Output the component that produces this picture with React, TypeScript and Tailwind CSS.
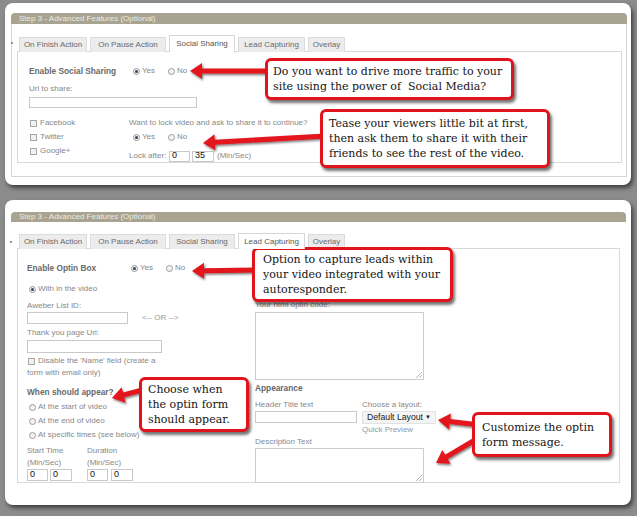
import React from "react";

const ui = "font-['Liberation_Sans',Arial,sans-serif]";
const callFont = "font-['DejaVu_Serif','Liberation_Serif',serif]";

const tabs = [
  { label: "On Finish Action", w: "w-[68px]" },
  { label: "On Pause Action", w: "w-[76px]" },
  { label: "Social Sharing", w: "w-[66px]" },
  { label: "Lead Capturing", w: "w-[67px]" },
  { label: "Overlay", w: "w-[37px]" },
];

const Radio = ({ on }: { on?: boolean }) => (
  <span className="inline-flex h-[7px] w-[7px] shrink-0 items-center justify-center rounded-full border border-[#9a9a9a] bg-[#f3f3f3]">
    {on && <span className="h-[3px] w-[3px] rounded-full bg-[#2c4560]" />}
  </span>
);

const Check = () => <span className="h-[7px] w-[7px] shrink-0 border border-[#a6a6a6] bg-[#f1f1f1]" />;

const YesNo = () => (
  <div className="flex items-center">
    <span className="flex w-[35px] items-center gap-[2px]">
      <Radio on />
      Yes
    </span>
    <span className="flex items-center gap-[2px]">
      <Radio />
      No
    </span>
  </div>
);

const Tabs = ({ active, h }: { active: number; h: string }) => (
  <div className={`flex items-end gap-[3px] pl-[2px] ${h}`}>
    {tabs.map((t, i) =>
      i === active ? (
        <div
          key={t.label}
          className={`relative z-10 flex h-full items-center justify-center border border-b-0 border-[#d6d6d6] bg-white text-[#555] ${t.w}`}
        >
          {t.label}
        </div>
      ) : (
        <div
          key={t.label}
          className={`flex h-[15px] items-center justify-center border border-b-0 border-[#dcdcdc] bg-[#ececec] text-[#6a6a6a] ${t.w}`}
        >
          {t.label}
        </div>
      )
    )}
  </div>
);

const Header = ({ h }: { h: string }) => (
  <div className={`flex items-center rounded-t-[4px] bg-[#a8a491] pl-[8px] text-[8px] text-[#ecebe2] ${h}`}>
    Step 3 - Advanced Features (Optional)
  </div>
);

const Box = ({ w, h, children }: { w: string; h: string; children?: React.ReactNode }) => (
  <div className={`flex items-center border border-[#c9c9c9] bg-white pl-[2px] text-[9px] text-[#111] ${w} ${h}`}>
    {children}
  </div>
);

const TextArea = ({ h }: { h: string }) => (
  <div className={`relative w-[169px] border border-[#cdcdcd] bg-white ${h}`}>
    <span className="absolute bottom-[1px] right-[1px] h-[6px] w-[6px] bg-[linear-gradient(135deg,transparent_45%,#bbb_45%,#bbb_55%,transparent_55%,transparent_70%,#bbb_70%,#bbb_80%,transparent_80%)]" />
  </div>
);

function arrowPoints(x1: number, y1: number, x2: number, y2: number) {
  const sw = 5, hl = 12, hw = 16;
  const dx = x2 - x1, dy = y2 - y1;
  const L = Math.hypot(dx, dy);
  const ux = dx / L, uy = dy / L, nx = -uy, ny = ux;
  const bx = x2 - ux * hl, by = y2 - uy * hl;
  const pts = [
    [x1 + (nx * sw) / 2, y1 + (ny * sw) / 2],
    [bx + (nx * sw) / 2, by + (ny * sw) / 2],
    [bx + (nx * hw) / 2, by + (ny * hw) / 2],
    [x2, y2],
    [bx - (nx * hw) / 2, by - (ny * hw) / 2],
    [bx - (nx * sw) / 2, by - (ny * sw) / 2],
    [x1 - (nx * sw) / 2, y1 - (ny * sw) / 2],
  ];
  return pts.map((p) => p.map((v) => v.toFixed(1)).join(",")).join(" ");
}

const arrows = [
  [272, 71, 190, 71],
  [326, 136, 203, 143],
  [258, 270, 192, 271],
  [146, 389, 112, 398],
  [480, 425, 438, 420],
  [480, 437, 436, 463],
];

const Callout = ({ pos, children }: { pos: string; children: React.ReactNode }) => (
  <div
    className={`absolute flex items-center whitespace-nowrap rounded-[6px] border-[3px] border-[#e1131b] bg-white text-[11px] leading-[15px] text-[#141414] shadow-[2px_3px_3px_rgba(0,0,0,0.55)] ${callFont} ${pos}`}
  >
    <div>{children}</div>
  </div>
);

export default function App() {
  return (
    <div className={`relative h-[516px] w-[637px] overflow-hidden bg-[#8c8c8c] pt-[3px] ${ui}`}>
      {/* panel 1 */}
      <div className="ml-[5px] h-[182px] w-[626px] rounded-[8px] bg-white pl-[6px] pr-[4px] pt-[10px] text-[8px] text-[#888] shadow-[2px_3px_4px_rgba(0,0,0,0.55)]">
        <Header h="h-[11px]" />
        <div className="relative h-[153px] border border-t-0 border-[#d6d6d6] pl-[5px] pt-[11px]">
          <span className="absolute left-[-1px] top-[18px] h-[2px] w-[2px] rounded-full bg-[#777]" />
          <Tabs active={2} h="h-[17px]" />
          <div className="-mt-px h-[112px] w-[605px] border border-[#d9d9d9] pl-[11px] pt-[12px]">
            <div className="flex h-[14px] items-center">
              <span className="w-[104px] text-[8.3px] font-bold text-[#6a6a6a]">Enable Social Sharing</span>
              <YesNo />
            </div>
            <div className="mt-[5px] h-[12px] leading-[12px]">Url to share:</div>
            <Box w="w-[168px]" h="mt-[2px] h-[11px]" />
            <div className="mt-[8px] flex">
              <div className="w-[100px]">
                {["Facebook", "Twitter", "Google+"].map((s) => (
                  <div key={s} className="flex h-[14px] items-center gap-[3px] pl-[1px]">
                    <Check />
                    {s}
                  </div>
                ))}
              </div>
              <div>
                <div className="flex h-[14px] items-center">Want to lock video and ask to share it to continue?</div>
                <div className="flex h-[14px] items-center pl-[4px]">
                  <YesNo />
                </div>
                <div className="mt-[6px] flex h-[12px] items-center">
                  <span className="w-[40px]">Lock after:</span>
                  <Box w="w-[21px]" h="h-[11px]">0</Box>
                  <Box w="ml-[2px] w-[22px]" h="h-[11px]">35</Box>
                  <span className="ml-[3px]">(Min/Sec)</span>
                </div>
              </div>
            </div>
          </div>
        </div>
      </div>

      {/* panel 2 */}
      <div className="ml-[5px] mt-[15px] h-[305px] w-[626px] rounded-[8px] bg-white pl-[6px] pr-[5px] pt-[12px] text-[8px] text-[#888] shadow-[2px_3px_4px_rgba(0,0,0,0.55)]">
        <Header h="h-[10px]" />
        <div className="relative pl-[6px] pt-[11px]">
          <span className="absolute left-[-1px] top-[19px] h-[2px] w-[2px] rounded-full bg-[#777]" />
          <Tabs active={3} h="h-[16px]" />
          <div className="-mt-px flex h-[235px] w-[603px] border border-[#d9d9d9] pl-[9px]">
            <div className="w-[228px] pt-[12px]">
              <div className="flex h-[14px] items-center">
                <span className="w-[104px] text-[8.3px] font-bold text-[#6a6a6a]">Enable Optin Box</span>
                <YesNo />
              </div>
              <div className="mt-[8px] flex h-[12px] items-center gap-[2px] pl-[2px]">
                <Radio on />
                With in the video
              </div>
              <div className="mt-[5px] h-[12px] leading-[12px]">Aweber List ID:</div>
              <div className="flex items-center">
                <Box w="w-[101px]" h="h-[12px]" />
                <span className="ml-[14px] text-[#999]">&lt;-- OR --&gt;</span>
              </div>
              <div className="mt-[3px] h-[12px] leading-[12px]">Thank you page Url:</div>
              <Box w="mt-[1px] w-[135px]" h="h-[13px]" />
              <div className="mt-[2px] flex h-[12px] items-center gap-[3px] pl-[1px]">
                <Check />
                Disable the 'Name' field (create a
              </div>
              <div className="h-[12px] leading-[12px]">form with email only)</div>
              <div className="mt-[7px] h-[12px] text-[8.3px] font-bold leading-[12px] text-[#6a6a6a]">When should appear?</div>
              <div className="mt-[3px] flex flex-col gap-[2px]">
                {["At the start of video", "At the end of video", "At specific times (see below)"].map((s) => (
                  <div key={s} className="flex h-[12px] items-center gap-[2px] pl-[2px]">
                    <Radio />
                    {s}
                  </div>
                ))}
              </div>
              <div className="mt-[4px] flex">
                <div className="w-[60px]">
                  <div className="h-[12px] leading-[12px]">Start Time</div>
                  <div className="h-[12px] leading-[12px]">(Min/Sec)</div>
                  <div className="flex gap-[2px]">
                    <Box w="w-[21px]" h="h-[12px]">0</Box>
                    <Box w="w-[22px]" h="h-[12px]">0</Box>
                  </div>
                </div>
                <div>
                  <div className="h-[12px] leading-[12px]">Duration</div>
                  <div className="h-[12px] leading-[12px]">(Min/Sec)</div>
                  <div className="flex gap-[3px]">
                    <Box w="w-[21px]" h="h-[12px]">0</Box>
                    <Box w="w-[22px]" h="h-[12px]">0</Box>
                  </div>
                </div>
              </div>
            </div>
            <div className="pt-[50px]">
              <div className="h-[12px] leading-[12px]">Your html optin code:</div>
              <div className="mt-[1px]">
                <TextArea h="h-[68px]" />
              </div>
              <div className="mt-[2px] h-[12px] text-[8.3px] font-bold leading-[12px] text-[#5f6770]">Appearance</div>
              <div className="mt-[5px] flex h-[37px] gap-[5px]">
                <div className="w-[102px]">
                  <div className="h-[12px] leading-[12px]">Header Title text</div>
                  <Box w="w-[102px]" h="h-[12px]" />
                </div>
                <div>
                  <div className="h-[12px] leading-[12px]">Choose a layout:</div>
                  <div className="flex h-[13px] w-[74px] items-center justify-between border border-[#e2e2e2] bg-[#f4f4f4] px-[4px] text-[8.7px] text-[#222]">
                    Default Layout
                    <span className="text-[6px]">▼</span>
                  </div>
                  <div className="h-[12px] leading-[12px] text-[#8c9aa6]">Quick Preview</div>
                </div>
              </div>
              <div className="h-[12px] leading-[12px] text-[#7f8aa0]">Description Text</div>
              <TextArea h="h-[35px]" />
            </div>
          </div>
        </div>
      </div>

      {/* arrows */}
      <svg className="pointer-events-none absolute left-0 top-0" width="637" height="516">
        <defs>
          <filter id="ash" x="-20%" y="-50%" width="140%" height="200%">
            <feDropShadow dx="1" dy="1.5" stdDeviation="1" floodColor="#000" floodOpacity="0.55" />
          </filter>
        </defs>
        {arrows.map(([a, b, c, d], i) => (
          <polygon key={i} points={arrowPoints(a, b, c, d)} fill="#e2141c" filter="url(#ash)" />
        ))}
      </svg>

      {/* callouts */}
      <Callout pos="left-[265px] top-[58px] h-[42px] w-[249px] pl-[5px]">
        Do you want to drive more traffic to your
        <br />
        site using the power of&nbsp; Social Media?
      </Callout>
      <Callout pos="left-[320px] top-[109px] h-[59px] w-[230px] pl-[6px]">
        Tease your viewers little bit at first,
        <br />
        then ask them to share it with their
        <br />
        friends to see the rest of the video.
      </Callout>
      <Callout pos="left-[252px] top-[247px] h-[55px] w-[201px] pl-[8px]">
        Option to capture leads within
        <br />
        your video integrated with your
        <br />
        autoresponder.
      </Callout>
      <Callout pos="left-[139px] top-[377px] h-[55px] w-[110px] pl-[6px]">
        Choose when
        <br />
        the optin form
        <br />
        should appear.
      </Callout>
      <Callout pos="left-[472px] top-[412px] h-[45px] w-[140px] pl-[7px]">
        Customize the optin
        <br />
        form message.
      </Callout>
    </div>
  );
}
